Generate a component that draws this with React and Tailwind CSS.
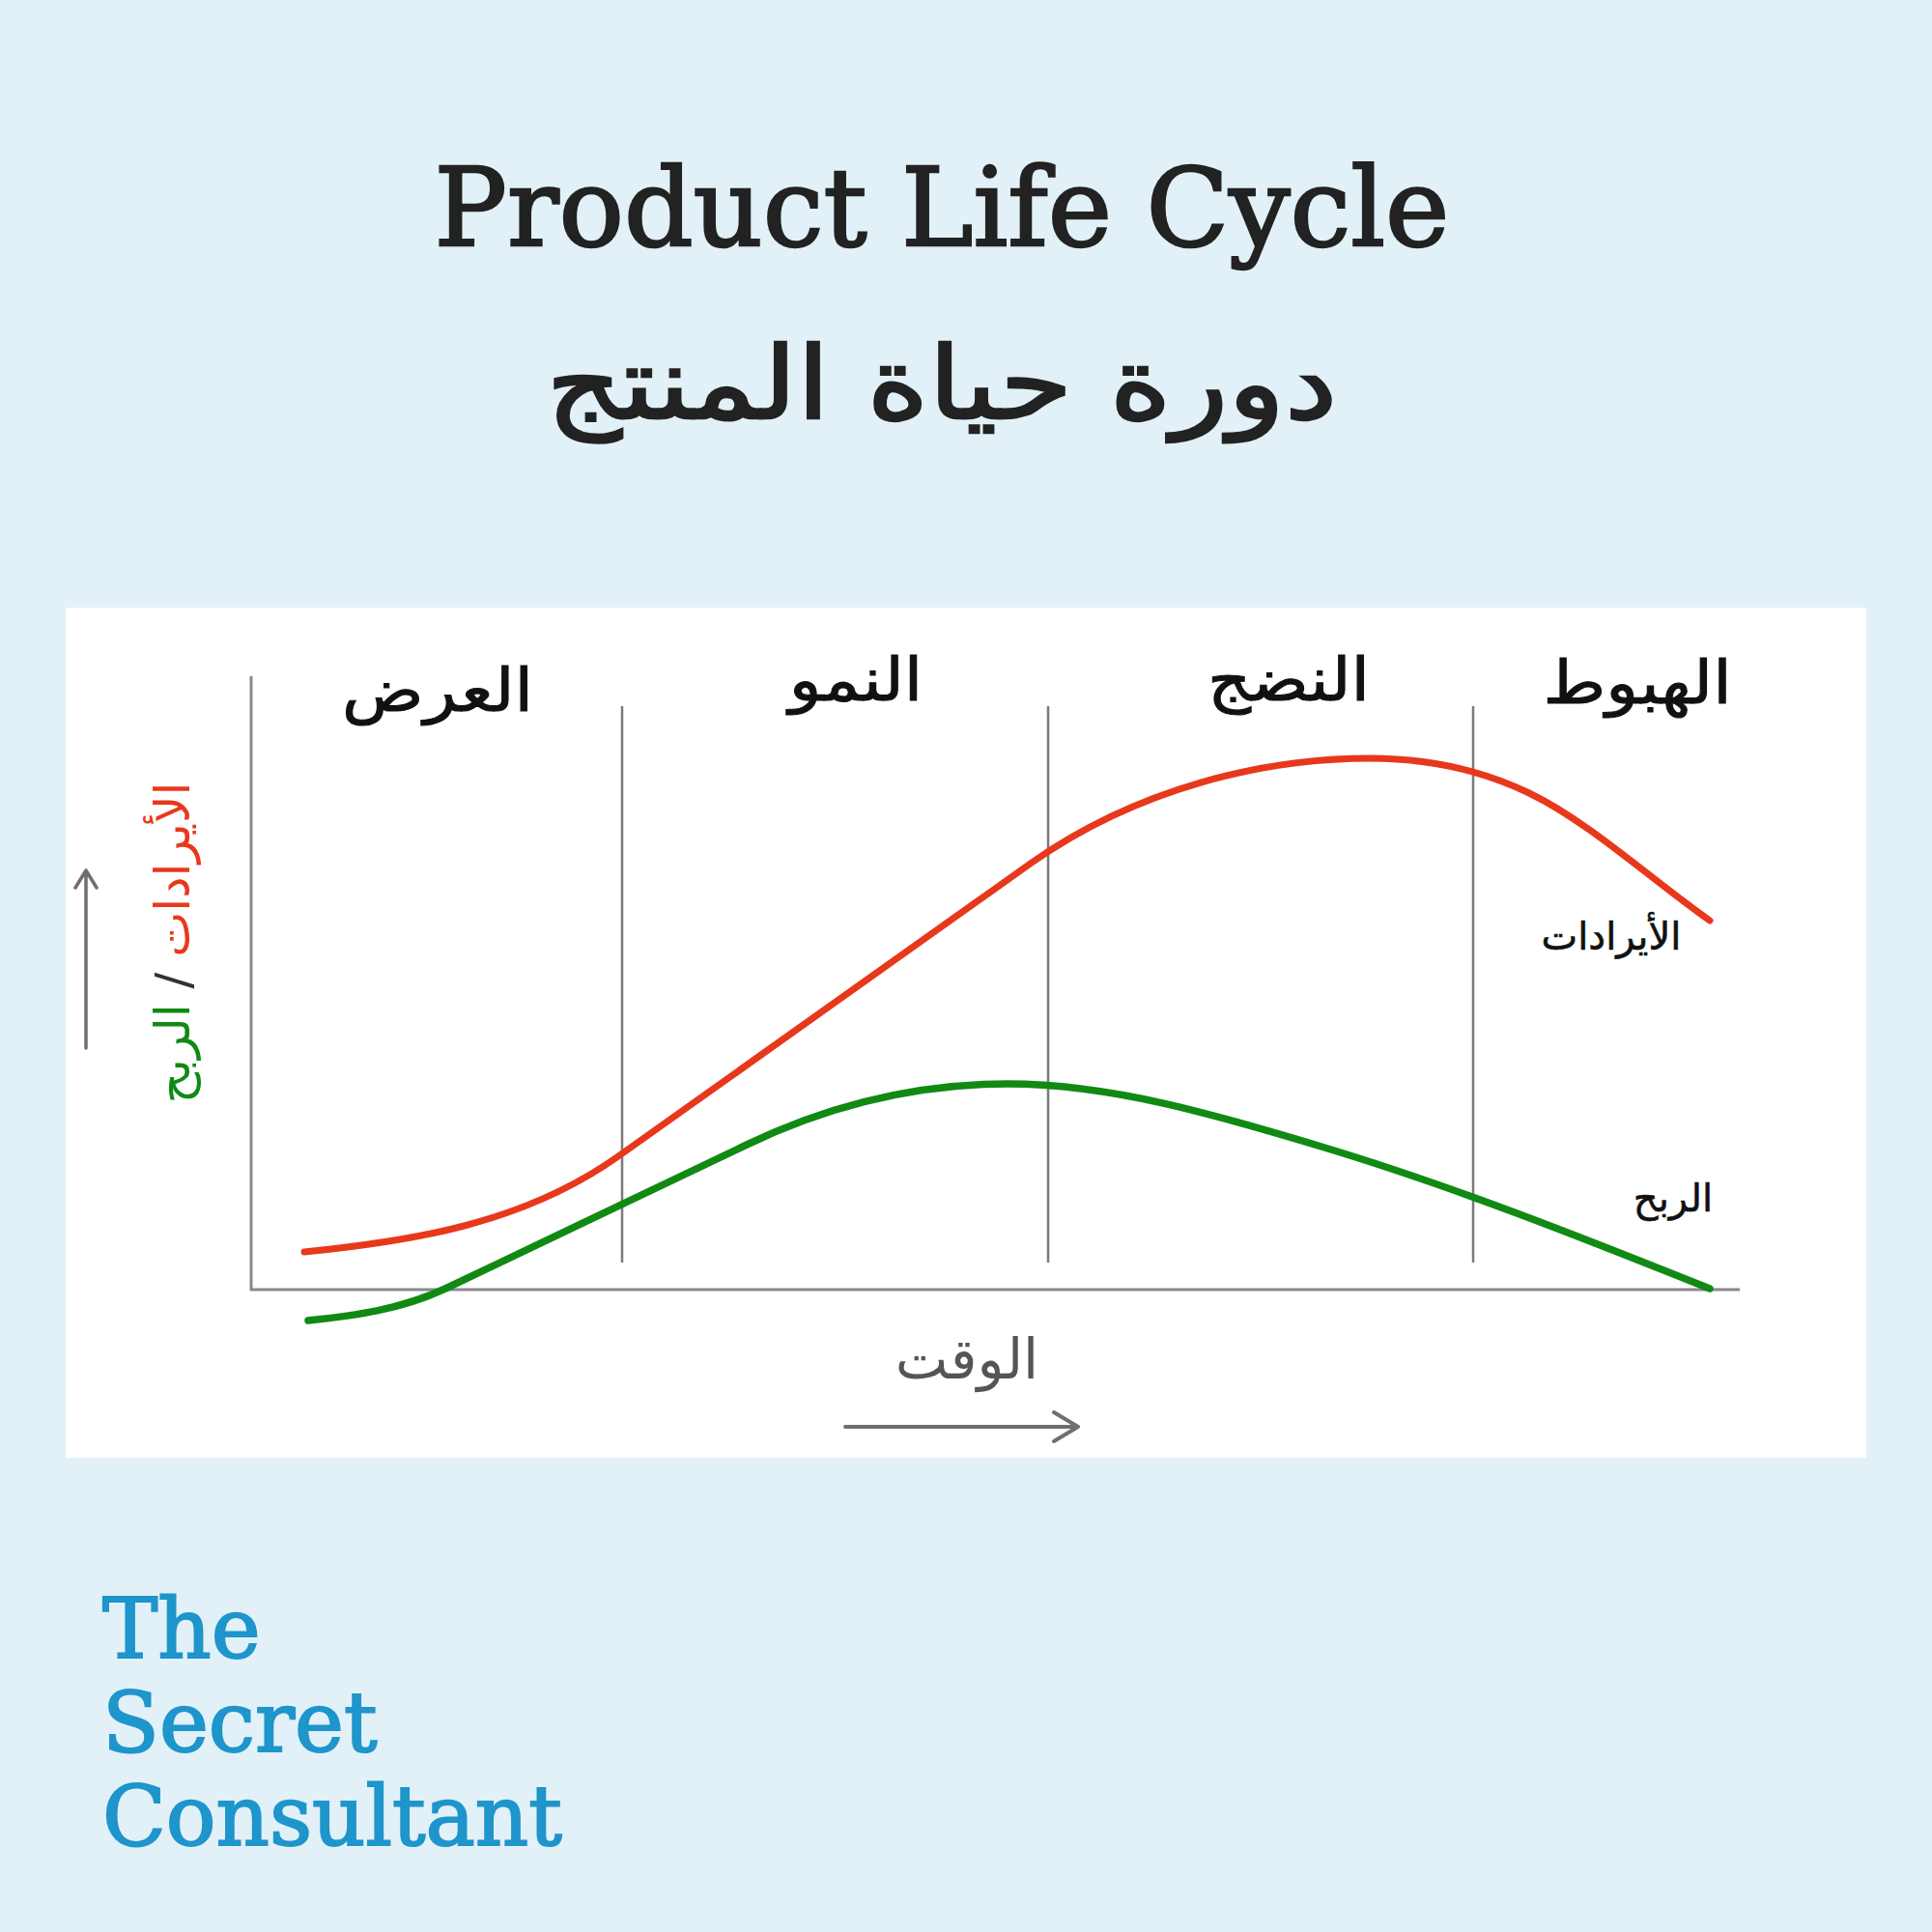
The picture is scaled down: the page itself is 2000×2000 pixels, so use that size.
import React from 'react';

// curves, in panel pixels
const revenuePath =
  'M247,667 C355,656 472,639 572,568 L1000,264 C1110,187 1240,156 1350,156 ' +
  'C1405,156 1460,165.6 1515,192 C1577,222 1640,280.4 1702,324';

const profitPath =
  'M251,738 C298,733 346,727 393,705 L705,556 C795,512.8 885,493 975,493 ' +
  'C1083,493 1192,525.5 1300,558 C1434,598.2 1568,651.4 1702,705';

const arabic = '"DejaVu Sans", sans-serif';

const stages = [
  { label: 'العرض', x: 385, y: 107 },
  { label: 'النمو', x: 818, y: 96 },
  { label: 'النضج', x: 1266, y: 96 },
  { label: 'الهبوط', x: 1627, y: 99 },
];

const Chart = () => (
  <svg width="1864" height="880" viewBox="0 0 1864 880" className="block">
    {/* axes */}
    <path d="M192,71 L192,706 L1733,706" fill="none" stroke="#8a8a8a" strokeWidth="3" />
    {[576, 1017, 1457].map((x) => (
      <line key={x} x1={x} y1="102" x2={x} y2="678" stroke="#7a7a7a" strokeWidth="2.5" />
    ))}

    {stages.map((s) => (
      <text
        key={s.label}
        transform={`translate(${s.x},${s.y}) scale(1.13,1)`}
        textAnchor="middle"
        fontFamily={arabic}
        fontSize="62"
        fill="#111"
        stroke="#111"
        strokeWidth="1"
      >
        {s.label}
      </text>
    ))}

    <path d={revenuePath} fill="none" stroke="#e8381c" strokeWidth="7" strokeLinecap="round" strokeLinejoin="round" />
    <path d={profitPath} fill="none" stroke="#118a14" strokeWidth="7.5" strokeLinecap="round" strokeLinejoin="round" />

    <text x="1600" y="354" textAnchor="middle" fontFamily={arabic} fontSize="40" fill="#111" stroke="#111" strokeWidth="0.6">الأيرادات</text>
    <text x="1664" y="625" textAnchor="middle" fontFamily={arabic} fontSize="40" fill="#111" stroke="#111" strokeWidth="0.6">الربح</text>

    {/* vertical label */}
    <text
      transform="translate(111,347) rotate(-90)"
      textAnchor="middle"
      dominantBaseline="central"
      direction="rtl"
      fontFamily={arabic}
      fontSize="50"
    >
      <tspan fill="#e8381c">الأيرادات</tspan>
      <tspan fill="#333"> / </tspan>
      <tspan fill="#118a14">الربح</tspan>
    </text>

    {/* up arrow */}
    <path d="M21,456 L21,272 M10,290 L21,272 L32,290" fill="none" stroke="#6f6f6f" strokeWidth="3.5" strokeLinecap="round" strokeLinejoin="round" />

    <text x="933" y="798" textAnchor="middle" fontFamily={arabic} fontSize="58" fill="#555">الوقت</text>

    {/* right arrow */}
    <path d="M807,848 L1047,848 M1023,833 L1048,848 L1023,863" fill="none" stroke="#6f6f6f" strokeWidth="4" strokeLinecap="round" strokeLinejoin="round" />
  </svg>
);

export default function App() {
  return (
    <div className="w-[2000px] h-[2000px] bg-[#e2f0f7] flex flex-col">
      <div className="pt-[159px] pr-[50px] text-center text-[#222]">
        <h1
          className="text-[112px] leading-none font-normal [-webkit-text-stroke:2.5px_#222222]"
          style={{ fontFamily: '"DejaVu Serif", serif' }}
        >
          Product Life Cycle
        </h1>
        <h2
          dir="rtl"
          className="mt-[74px] text-[104px] leading-none font-normal [-webkit-text-stroke:2.5px_#222222]"
          style={{ fontFamily: '"DejaVu Sans", sans-serif' }}
        >
          <span className="inline-block scale-x-[1.17]">دورة حياة المنتج</span>
        </h2>
      </div>

      <div className="mx-[68px] mt-[180px] h-[880px] bg-white">
        <Chart />
      </div>

      <div
        className="pl-[106px] mt-[129px] text-[86px] leading-[97px] text-[#1e95cb] [-webkit-text-stroke:2px_#1e95cb]"
        style={{ fontFamily: '"DejaVu Serif", serif' }}
      >
        <div>The</div>
        <div>Secret</div>
        <div>Consultant</div>
      </div>
    </div>
  );
}
